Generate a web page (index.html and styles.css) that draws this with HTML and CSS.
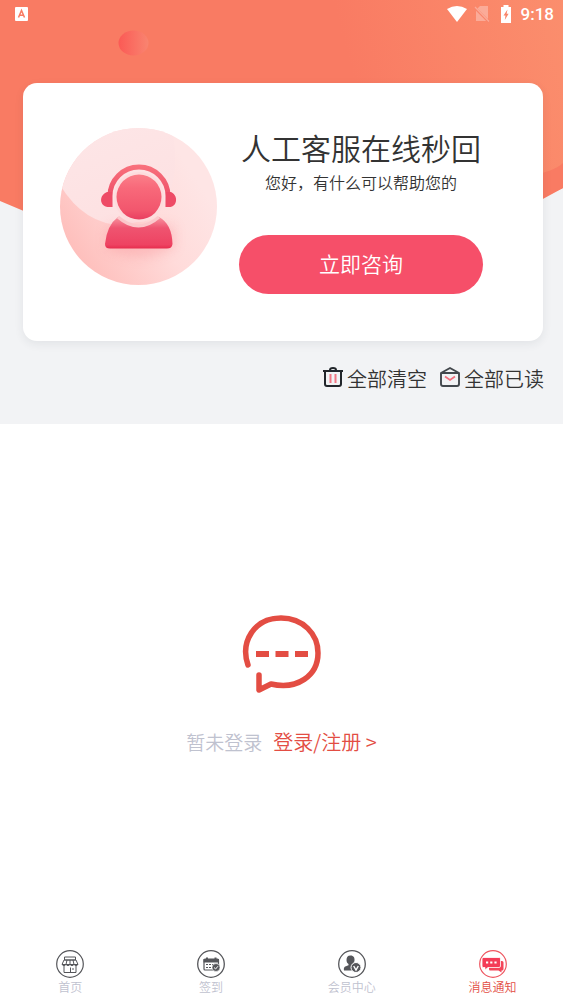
FILE: index.html
```html
<!DOCTYPE html>
<html lang="zh-CN">
<head>
<meta charset="utf-8">
<meta name="viewport" content="width=device-width, initial-scale=1">
<title>消息通知</title>
<link rel="stylesheet" href="styles.css">
</head>
<body>
<header class="hero">
  <svg class="hero-bg" viewBox="0 0 563 320" preserveAspectRatio="none" aria-hidden="true">
    <defs>
      <linearGradient id="sky" x1="0" x2="1" y1="0.15" y2="0">
        <stop offset="0.6" stop-color="#f97b63"/><stop offset="1" stop-color="#fb8e6d"/>
      </linearGradient>
      <linearGradient id="dot"><stop offset="0" stop-color="#fb5a55"/><stop offset="1" stop-color="#f98470"/></linearGradient>
    </defs>
    <path d="M0 0H563V188L283 320L0 201Z" fill="url(#sky)"/>
    <path d="M563 163Q555 171 530 176V206L563 188Z" fill="#f97b63"/>
    <ellipse cx="133.500" cy="43" rx="15" ry="12.500" fill="url(#dot)"/>
  </svg>
  <div class="status">
    <svg class="status-app" viewBox="0 0 13 14" role="img" aria-label="输入法"><rect width="13" height="14" rx="1" fill="#fff"/><path d="M3.500 10.500L6.500 3.500L9.500 10.500M4.600 8.300H8.400" fill="none" stroke="#f97b63" stroke-width="1.500"/></svg>
    <svg class="status-wifi" viewBox="0 0 20 16" aria-hidden="true"><path d="M0 3Q10-3 20 3L10 16Z" fill="#fff"/></svg>
    <svg class="status-sim" viewBox="0 0 16 18" aria-hidden="true"><path d="M6 1H14V16H2V5Z" fill="#fbab98"/><path d="M0 2L15 17" stroke="#f9856b" stroke-width="2.500"/><path d="M1 2L15 16.500" stroke="#fbab98" stroke-width="1.200"/></svg>
    <svg class="status-battery" viewBox="0 0 12 18" aria-hidden="true"><path d="M3.500 0H8.500V2H11V18H1V2H3.500Z" fill="#fff"/><path d="M7.500 4.500L3.500 10.500H5.500L4.800 15L8.600 8.800H6.600Z" fill="#fa8469"/></svg>
    <span class="clock">9:18</span>
  </div>
  <section class="card">
    <svg class="avatar" viewBox="0 0 157 157" aria-hidden="true">
      <defs>
        <clipPath id="disc"><circle cx="78.500" cy="78.500" r="78.500"/></clipPath>
        <linearGradient id="base" x1="0.1" y1="0.8" x2="0.85" y2="0.3"><stop offset="0" stop-color="#febfbc"/><stop offset="0.55" stop-color="#ffdbda"/><stop offset="1" stop-color="#fee5e5"/></linearGradient>
        <linearGradient id="shine" x1="0" y1="0" x2="0.5" y2="1"><stop offset="0" stop-color="#fde6e7"/><stop offset="1" stop-color="#fde1e2"/></linearGradient>
        <linearGradient id="red" gradientUnits="userSpaceOnUse" x1="0" y1="37" x2="0" y2="80"><stop offset="0" stop-color="#f9727d"/><stop offset="1" stop-color="#ea4562"/></linearGradient>
        <linearGradient id="torso" x1="0" y1="0" x2="0" y2="1"><stop offset="0" stop-color="#f894a0"/><stop offset="0.35" stop-color="#ef5470"/><stop offset="0.88" stop-color="#ee4362"/><stop offset="1" stop-color="#e62c4d"/></linearGradient>
        <linearGradient id="head" x1="0" y1="0" x2="0" y2="1"><stop offset="0" stop-color="#fb7f89"/><stop offset="0.3" stop-color="#f8697a"/><stop offset="0.8" stop-color="#f2566d"/><stop offset="1" stop-color="#e93f60"/></linearGradient>
        <filter id="soft" x="-40%" y="-40%" width="180%" height="200%"><feGaussianBlur stdDeviation="6"/></filter>
      </defs>
      <g clip-path="url(#disc)">
        <rect width="157" height="157" fill="url(#base)"/>
        <path d="M0 0H112Q128 86 65 97Q25 98 0 57Z" fill="url(#shine)"/>
        <path d="M48 98H114V120Q80 138 46 120Z" fill="#f88b92" opacity="0.35" filter="url(#soft)"/>
      </g>
      <g transform="translate(0 -1)">
        <path d="M58 90Q78.500 108 99 90Q112 97 112.500 117Q112 121.500 107 121.500H50Q45 121.500 45 117Q47 98 58 90Z" fill="url(#torso)"/>
        <path d="M58 90Q78.500 108 99 90" fill="none" stroke="#fbc8cb" stroke-width="3"/>
        <circle cx="79" cy="70" r="25" fill="#fddcdd"/>
        <path d="M50 80V69A29 29 0 0 1 108 69V80" fill="none" stroke="url(#red)" stroke-width="5"/>
        <path d="M52 65V80H48C39 79 39 68 47 65ZM106 65V80H110C118 79 118 68 111 65Z" fill="#ee4b66"/>
        <circle cx="79" cy="70" r="22.500" fill="url(#head)"/>
      </g>
    </svg>
    <div class="service">
      <h1 class="service-title">人工客服在线秒回</h1>
      <p class="service-text">您好，有什么可以帮助您的</p>
      <button class="consult" type="button">立即咨询</button>
    </div>
  </section>
  <div class="actions">
    <button class="action" type="button">
      <svg class="action-icon" viewBox="0 0 20 20" fill="none" aria-hidden="true"><path d="M0 4H20M7 3Q7 1 10 1Q13 1 13 3M2 4V17Q2 19 4 19H16Q18 19 18 17V4" stroke="#22262b" stroke-width="2"/><path d="M7.500 7V16M12.500 7V16" stroke="#f17784" stroke-width="2"/></svg>
      全部清空
    </button>
    <button class="action" type="button">
      <svg class="action-icon" viewBox="0 0 20 20" fill="none" aria-hidden="true"><path d="M1 6L10 1L19 6V17Q19 19 17 19H3Q1 19 1 17ZM1 6H19" stroke="#43484d" stroke-width="1.900" stroke-linejoin="round"/><path d="M5 9.500L10 13L15 9.500" stroke="#f3707e" stroke-width="1.800"/></svg>
      全部已读
    </button>
  </div>
</header>
<main class="empty">
  <svg class="bubble" viewBox="0 0 80 80" fill="none" aria-hidden="true">
    <path d="M6 51C-2 28 12 4 39 4C61 4 76 20 76 39C76 62 55 76 29 70L17 76V61" stroke="#e34d43" stroke-width="5.500" stroke-linecap="round" stroke-linejoin="round"/>
    <path d="M14 40H66.500" stroke="#e34d43" stroke-width="6" stroke-dasharray="13 6.500"/>
  </svg>
  <p class="login-line">暂未登录 <a class="login" href="#login">登录/注册 &gt;</a></p>
</main>
<nav class="tabs">
  <a class="tab" href="#home">
    <svg class="tab-icon" viewBox="0 0 28 28" fill="none" stroke="#55565a" aria-hidden="true"><circle cx="14" cy="14" r="13.300" stroke-width="1.200"/><path d="M8.500 7H19.500V10H8.500ZM8 10L6 14.500H22L20 10ZM11 10L10 14.500M14 10V14.500M17 10L18 14.500M6 14.500Q8 17 10 14.500Q12 17 14 14.500Q16 17 18 14.500Q20 17 22 14.500M8 16V22.500H20V16M14.500 17.500V22.500M17 18V20"/></svg>
    <span>首页</span>
  </a>
  <a class="tab" href="#sign">
    <svg class="tab-icon" viewBox="0 0 28 28" fill="none" aria-hidden="true"><circle cx="14" cy="14" r="13.300" stroke="#55565a" stroke-width="1.300"/><rect x="7" y="9" width="14.500" height="11" rx="1" stroke="#55565a" stroke-width="1.200"/><path d="M6.500 9H22V12.500H6.500ZM9 7.500H11V10H9ZM17.500 7.500H19.500V10H17.500Z" fill="#55565a"/><path d="M9 14.500H18M9 17.500H15" stroke="#55565a" stroke-width="1.200" stroke-dasharray="2 1"/><circle cx="19" cy="17.500" r="4" fill="#55565a" stroke="#fff" stroke-width="0.600"/><path d="M17 17.500L18.600 19L21 16.200" stroke="#fff"/></svg>
    <span>签到</span>
  </a>
  <a class="tab" href="#member">
    <svg class="tab-icon" viewBox="0 0 28 28" fill="none" aria-hidden="true"><circle cx="14" cy="14" r="13.300" stroke="#55565a" stroke-width="1.300"/><path d="M12.500 5.500C15.800 5.500 16.800 8 16.500 10.500C16.200 12.500 15.500 13 14.500 14V15.500L18 17V20.500H6C5.500 17 6.500 16.500 10.500 15.200V14C9.200 13 8.500 12 8.500 10C8.500 7.500 9.500 5.500 12.500 5.500Z" fill="#55565a"/><circle cx="18" cy="17.500" r="5" fill="#55565a" stroke="#fff"/><path d="M15.700 16L18 20L20.300 16" stroke="#fff" stroke-width="1.400"/></svg>
    <span>会员中心</span>
  </a>
  <a class="tab tab-active" href="#messages" aria-current="page">
    <svg class="tab-icon" viewBox="0 0 28 28" fill="none" aria-hidden="true"><circle cx="14" cy="14" r="13.300" stroke="#ee5660" stroke-width="1.200"/><path d="M10 11H23Q24.500 11 24.500 12.500V19Q24.500 20.500 23 20.500H22.500V22.500L19.500 20.500H11Q10 20.500 10 19Z" fill="#f44559"/><path d="M4 7.500H20.500Q21.500 7.500 21.500 9V16Q21.500 17.500 20 17.500H9L6 20V17.500H4Q3 17.500 3 16V9Q3 7.500 4 7.500Z" fill="#f43c57" stroke="#fff" stroke-width="0.800"/><path d="M7 12.500H9.200M11.200 12.500H13.400M15.400 12.500H17.600" stroke="#fff" stroke-width="2"/></svg>
    <span>消息通知</span>
  </a>
</nav>
</body>
</html>
```

FILE: styles.css
```css
* {
  box-sizing: border-box;
}

body {
  margin: 0;
  min-height: 100vh;
  display: flex;
  flex-direction: column;
  background: #fff;
  color: #333;
  font-family: "Noto Sans CJK SC", "Noto Sans", sans-serif;
  font-weight: 350;
}

button {
  border: 0;
  padding: 0;
  font-family: inherit;
  font-weight: inherit;
  cursor: pointer;
}

.hero {
  position: relative;
  isolation: isolate;
  background: #f2f3f5;
  padding-bottom: 30px;
}

.hero-bg {
  position: absolute;
  z-index: -1;
  top: 0;
  left: 0;
  width: 100%;
  height: 320px;
}

.status {
  display: flex;
  align-items: center;
  height: 28px;
  padding: 0 9px 0 15px;
  color: #fff;
}

.status-app {
  width: 13px;
  height: 14px;
  margin-right: auto;
}

.status-wifi {
  width: 20px;
  height: 16px;
}

.status-sim {
  width: 16px;
  height: 18px;
  margin-left: 7px;
}

.status-battery {
  width: 12px;
  height: 18px;
  margin: 0 9px 0 10px;
}

.clock {
  font: 500 17px/28px Roboto, sans-serif;
}

.card {
  display: flex;
  align-items: flex-start;
  gap: 22px;
  margin: 55px 20px 0 23px;
  padding: 45px 60px 47px 37px;
  border-radius: 14px;
  background: #fff;
  box-shadow: 0 3px 10px rgba(40, 50, 70, 0.08);
}

.avatar {
  flex: none;
  width: 157px;
  height: 157px;
}

.service {
  flex: 1;
  text-align: center;
  white-space: nowrap;
}

.service-title {
  margin: 0;
  font-size: 30px;
  font-weight: inherit;
  line-height: 38px;
}

.service-text {
  margin: 0 0 37px;
  font-size: 16px;
  line-height: 32px;
}

.consult {
  display: block;
  width: 100%;
  padding-bottom: 2px;
  border-radius: 30px;
  background: #f64f69;
  color: #fff;
  font-size: 21px;
  line-height: 57px;
}

.actions {
  display: flex;
  justify-content: flex-end;
  gap: 13px;
  padding: 23px 19px 0;
}

.action {
  display: flex;
  align-items: center;
  gap: 4px;
  background: none;
  color: #333;
  font-size: 20px;
  line-height: 30px;
}

.action-icon {
  width: 20px;
  height: 20px;
  margin-bottom: 4px;
}

.empty {
  flex: 1;
  display: flex;
  flex-direction: column;
  align-items: center;
  justify-content: center;
  gap: 34px;
}

.bubble {
  width: 80px;
  height: 80px;
}

.login-line {
  display: flex;
  align-items: center;
  gap: 11px;
  margin: 0;
  color: #bfc2cf;
  font-size: 19px;
  line-height: 28px;
}

.login {
  color: #e34d43;
  font-size: 20px;
  text-decoration: none;
}

.tabs {
  display: grid;
  grid-template-columns: repeat(4, 1fr);
  padding: 4px 0 6px;
}

.tab {
  display: flex;
  flex-direction: column;
  align-items: center;
  color: #bfc2cf;
  font-size: 12px;
  line-height: 18px;
  text-decoration: none;
}

.tab-active {
  color: #e34d43;
}

.tab-icon {
  width: 28px;
  height: 28px;
}
```
